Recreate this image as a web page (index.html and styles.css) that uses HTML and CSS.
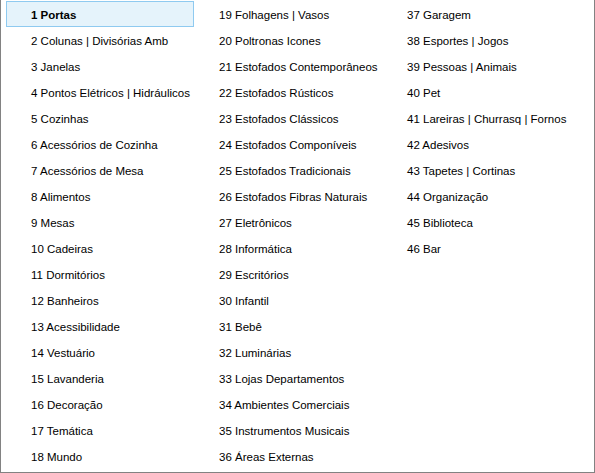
FILE: index.html
```html
<!DOCTYPE html>
<html lang="pt-BR">
<head>
    <meta charset="UTF-8">
    <meta name="viewport" content="width=device-width, initial-scale=1.0">
    <title>Categorias</title>
    <link rel="stylesheet" href="styles.css">
</head>
<body>
    <div class="list-view">
        <ul class="item-list">
            <li class="item selected">1 Portas</li>
            <li class="item">2 Colunas | Divisórias Amb</li>
            <li class="item">3 Janelas</li>
            <li class="item">4 Pontos Elétricos | Hidráulicos</li>
            <li class="item">5 Cozinhas</li>
            <li class="item">6 Acessórios de Cozinha</li>
            <li class="item">7 Acessórios de Mesa</li>
            <li class="item">8 Alimentos</li>
            <li class="item">9 Mesas</li>
            <li class="item">10 Cadeiras</li>
            <li class="item">11 Dormitórios</li>
            <li class="item">12 Banheiros</li>
            <li class="item">13 Acessibilidade</li>
            <li class="item">14 Vestuário</li>
            <li class="item">15 Lavanderia</li>
            <li class="item">16 Decoração</li>
            <li class="item">17 Temática</li>
            <li class="item">18 Mundo</li>
            <li class="item">19 Folhagens | Vasos</li>
            <li class="item">20 Poltronas Icones</li>
            <li class="item">21 Estofados Contemporâneos</li>
            <li class="item">22 Estofados Rústicos</li>
            <li class="item">23 Estofados Clássicos</li>
            <li class="item">24 Estofados Componíveis</li>
            <li class="item">25 Estofados Tradicionais</li>
            <li class="item">26 Estofados Fibras Naturais</li>
            <li class="item">27 Eletrônicos</li>
            <li class="item">28 Informática</li>
            <li class="item">29 Escritórios</li>
            <li class="item">30 Infantil</li>
            <li class="item">31 Bebê</li>
            <li class="item">32 Luminárias</li>
            <li class="item">33 Lojas Departamentos</li>
            <li class="item">34 Ambientes Comerciais</li>
            <li class="item">35 Instrumentos Musicais</li>
            <li class="item">36 Áreas Externas</li>
            <li class="item">37 Garagem</li>
            <li class="item">38 Esportes | Jogos</li>
            <li class="item">39 Pessoas | Animais</li>
            <li class="item">40 Pet</li>
            <li class="item">41 Lareiras | Churrasq | Fornos</li>
            <li class="item">42 Adesivos</li>
            <li class="item">43 Tapetes | Cortinas</li>
            <li class="item">44 Organização</li>
            <li class="item">45 Biblioteca</li>
            <li class="item">46 Bar</li>
        </ul>
    </div>
</body>
</html>
```

FILE: styles.css
```css
* {
    margin: 0;
    padding: 0;
    box-sizing: border-box;
}

body {
    background: #fff;
    font-family: 'Liberation Sans', Arial, sans-serif;
    font-size: 11.5px;
    color: #000;
}

.list-view {
    width: 595px;
    height: 473px;
    border: 1px solid #828282;
    border-top: none;
    padding: 1px 0 0 5px;
    overflow: hidden;
}

.item-list {
    list-style: none;
    display: grid;
    grid-template-columns: repeat(3, 188px);
    grid-template-rows: repeat(18, 26px);
    grid-auto-flow: column;
}

.item {
    padding: 2px 0 0 24px;
    line-height: 22px;
    white-space: nowrap;
    border: 1px solid transparent;
}

.item.selected {
    background: #e5f3fb;
    border-color: #8fcaf0;
    font-weight: bold;
}
```
